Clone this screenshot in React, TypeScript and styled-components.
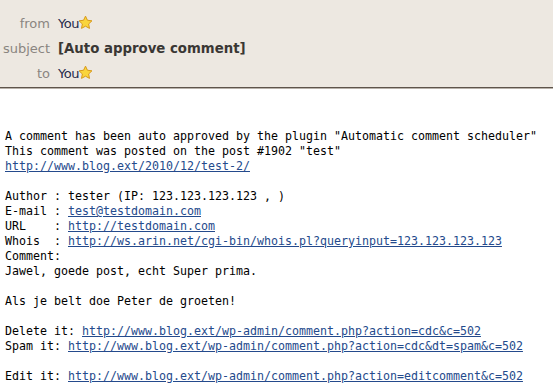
import React from 'react';
import styled, { createGlobalStyle } from 'styled-components';

const Global = createGlobalStyle`
  html, body { margin: 0; padding: 0; background: #fff; }
  body { width: 553px; height: 391px; overflow: hidden; }
`;

const Header = styled.div`
  background: #ede8e1;
  height: 88px;
  box-sizing: border-box;
  padding-top: 11px;
  border-bottom: 1px solid #5e544b;
  box-shadow: 0 1px 0 #b9b2aa;
  font-family: 'DejaVu Sans', sans-serif;
  font-size: 13px;
`;

const Row = styled.div`
  display: grid;
  grid-template-columns: 50px auto;
  column-gap: 8px;
  align-items: center;
  height: 25px;
`;

const Label = styled.span`
  text-align: right;
  color: #8a8580;
`;

const Value = styled.span<{ $bold?: boolean }>`
  color: ${p => (p.$bold ? '#3a3734' : '#262a4a')};
  font-weight: ${p => (p.$bold ? 'bold' : 'normal')};
  font-size: ${p => (p.$bold ? '13.3px' : '13px')};
  display: inline-flex;
  align-items: center;
  letter-spacing: ${p => (p.$bold ? '0' : '-0.5px')};
`;

const Body = styled.pre`
  margin: 41px 0 0 5px;
  font-family: 'DejaVu Sans Mono', monospace;
  font-size: 11.63px;
  line-height: 15px;
  color: #000;
`;

const A = styled.a`
  color: #244a8c;
  text-decoration: underline;
`;

const Star = () => (
  <svg width="15" height="15" viewBox="0 0 24 24" style={{ marginLeft: -1, marginTop: -2 }}>
    <path
      d="M12 1.8l3.1 6.6 7.2.9-5.3 5 1.4 7.1L12 17.9l-6.4 3.5 1.4-7.1-5.3-5 7.2-.9z"
      fill="#fad53c"
      stroke="#d89a1c"
      strokeWidth="1.6"
      strokeLinejoin="round"
    />
  </svg>
);

export default function App() {
  return (
    <>
      <Global />
      <Header>
        <Row>
          <Label>from</Label>
          <Value>You<Star /></Value>
        </Row>
        <Row>
          <Label>subject</Label>
          <Value $bold>[Auto approve comment]</Value>
        </Row>
        <Row>
          <Label>to</Label>
          <Value>You<Star /></Value>
        </Row>
      </Header>
      <Body>
{`A comment has been auto approved by the plugin "Automatic comment scheduler"
This comment was posted on the post #1902 "test"
`}<A href="#">http://www.blog.ext/2010/12/test-2/</A>{`

Author : tester (IP: 123.123.123.123 , )
E-mail : `}<A href="#">test@testdomain.com</A>{`
URL    : `}<A href="#">http://testdomain.com</A>{`
Whois  : `}<A href="#">http://ws.arin.net/cgi-bin/whois.pl?queryinput=123.123.123.123</A>{`
Comment:
Jawel, goede post, echt Super prima.

Als je belt doe Peter de groeten!

Delete it: `}<A href="#">http://www.blog.ext/wp-admin/comment.php?action=cdc&c=502</A>{`
Spam it: `}<A href="#">http://www.blog.ext/wp-admin/comment.php?action=cdc&dt=spam&c=502</A>{`

Edit it: `}<A href="#">http://www.blog.ext/wp-admin/comment.php?action=editcomment&c=502</A>
      </Body>
    </>
  );
}
